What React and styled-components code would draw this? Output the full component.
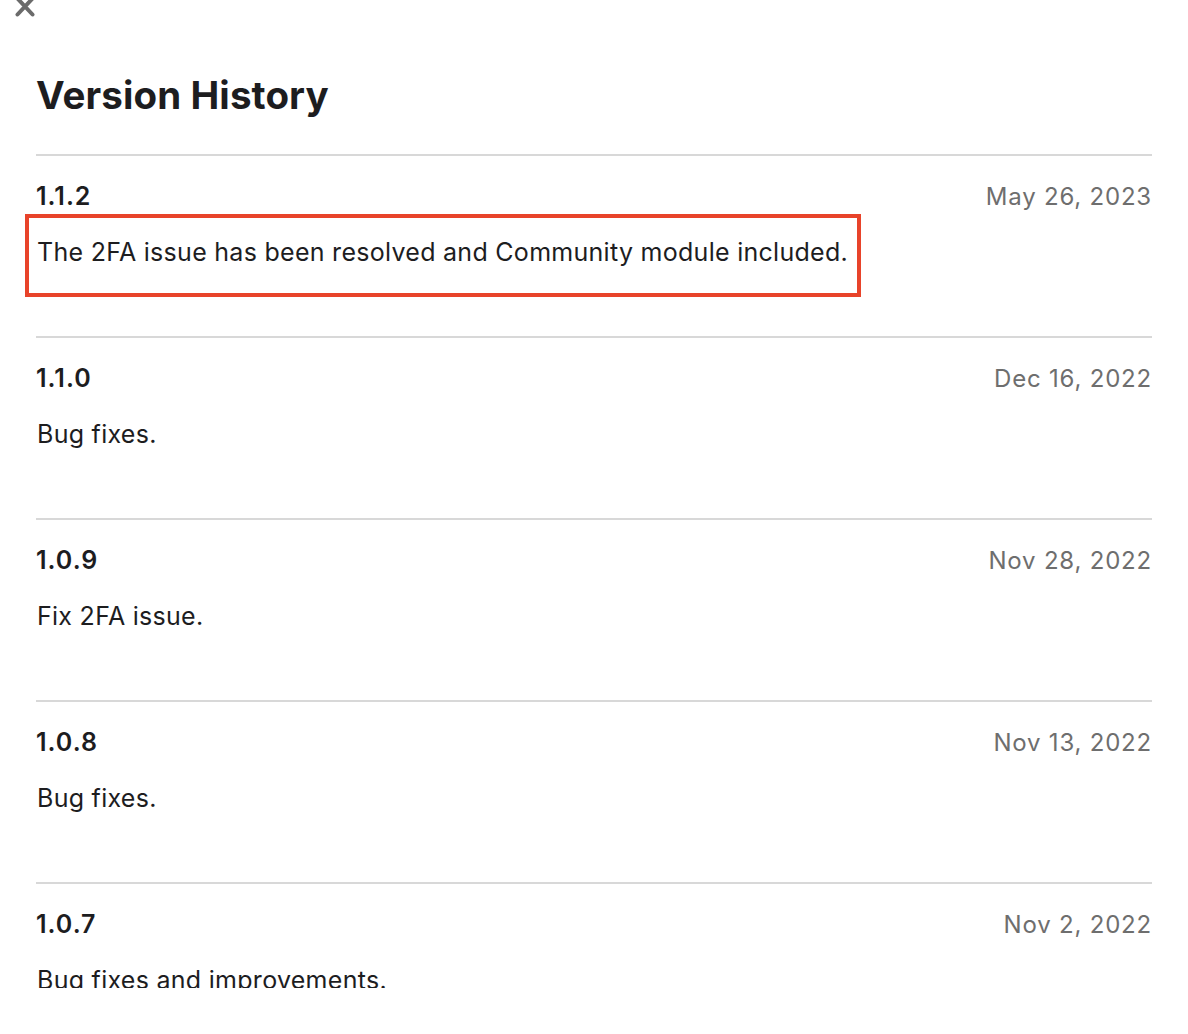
import React from 'react'
import styled, { createGlobalStyle } from 'styled-components'

const versions = [
    { version: '1.1.2', date: 'May 26, 2023', notes: 'The 2FA issue has been resolved and Community module included.', highlighted: true },
    { version: '1.1.0', date: 'Dec 16, 2022', notes: 'Bug fixes.' },
    { version: '1.0.9', date: 'Nov 28, 2022', notes: 'Fix 2FA issue.' },
    { version: '1.0.8', date: 'Nov 13, 2022', notes: 'Bug fixes.' },
    { version: '1.0.7', date: 'Nov 2, 2022', notes: 'Bug fixes and improvements.' },
]

function App() {
    return (
        <>
            <GlobalStyle />
            <Panel>
                <CloseButton aria-label="Close">
                    <svg width="24" height="20" viewBox="0 0 24 20">
                        <path d="M5.5 -1.5 L20.5 14.5 M20.5 -1.5 L5.5 14.5" stroke="#6b6b6b" strokeWidth="4" strokeLinecap="round" />
                    </svg>
                </CloseButton>

                <Content>
                    <Title>Version History</Title>

                    {versions.map((v) => (
                        <Entry key={v.version}>
                            <EntryHeader>
                                <Version>{v.version}</Version>
                                <ReleaseDate>{v.date}</ReleaseDate>
                            </EntryHeader>
                            <Notes $highlighted={v.highlighted}>{v.notes}</Notes>
                        </Entry>
                    ))}
                </Content>
            </Panel>
        </>
    )
}

export default App

const GlobalStyle = createGlobalStyle`
    body {
        margin: 0;
        background: #ffffff;
        font-family: Inter, "Liberation Sans", sans-serif;
        color: #1d1d1f;
    }
`;

const Panel = styled.div`
    height: 988px;
    overflow: hidden;
    background: #ffffff;
`;

const CloseButton = styled.button`
    display: block;
    height: 18px;
    width: 40px;
    margin-left: 12px;
    padding: 0;
    border: none;
    background: none;
    overflow: hidden;
    cursor: pointer;

    svg {
        display: block;
    }
`;

const Content = styled.div`
    padding: 0 36px;
`;

const Title = styled.h1`
    margin: 54px 0 36px;
    font-size: 38.5px;
    line-height: 46px;
    font-weight: 700;
    letter-spacing: 0.1px;
    color: #1d1d1f;
`;

const Entry = styled.section`
    height: 182px;
    box-sizing: border-box;
    border-top: 2px solid #d8d8d8;
    padding-top: 25px;
`;

const EntryHeader = styled.div`
    display: flex;
    justify-content: space-between;
    align-items: baseline;
`;

const Version = styled.h2`
    margin: 0;
    font-size: 25px;
    line-height: 30px;
    font-weight: 600;
    letter-spacing: 1px;
    color: #1d1d1f;
`;

const ReleaseDate = styled.span`
    font-size: 24px;
    line-height: 30px;
    color: #6e6e6e;
    letter-spacing: 0.8px;
`;

const Notes = styled.p`
    position: relative;
    display: inline-block;
    margin: 24px 0 0 1px;
    font-size: 25px;
    line-height: 32px;
    color: #1d1d1f;
    letter-spacing: 0.28px;

    &::after {
        content: '';
        display: ${(p) => (p.$highlighted ? 'block' : 'none')};
        position: absolute;
        top: -22px;
        left: -12px;
        right: -13px;
        bottom: -29px;
        border: 4px solid #e8432a;
        pointer-events: none;
    }
`;
